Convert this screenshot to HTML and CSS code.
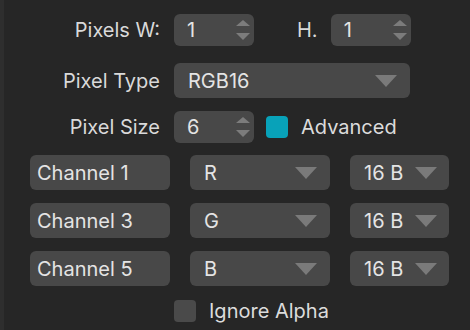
FILE: index.html
```html
<!DOCTYPE html>
<html lang="en">
<head>
    <meta charset="UTF-8">
    <title>Pixel Format</title>
    <link rel="stylesheet" href="styles.css">
</head>
<body>
<div class="panel">
    <!-- верхняя часть: размеры и тип -->
    <div class="row row-w">
        <div class="label">Pixels W:</div>
        <div class="field spin">
            <span>1</span>
            <span class="spin-arrows"><i class="up"></i><i class="down"></i></span>
        </div>
        <div class="label small">H.</div>
        <div class="field spin">
            <span>1</span>
            <span class="spin-arrows"><i class="up"></i><i class="down"></i></span>
        </div>
    </div>

    <div class="row row-type">
        <div class="label">Pixel Type</div>
        <div class="field select wide">
            <span>RGB16</span>
            <i class="caret"></i>
        </div>
    </div>

    <div class="row row-size">
        <div class="label">Pixel Size</div>
        <div class="field spin">
            <span>6</span>
            <span class="spin-arrows"><i class="up"></i><i class="down"></i></span>
        </div>
        <label class="check">
            <span class="box on"></span>
            <span>Advanced</span>
        </label>
    </div>

    <!-- каналы -->
    <div class="channels">
        <div class="channel-row">
            <div class="field name">Channel 1</div>
            <div class="field select mid"><span>R</span><i class="caret"></i></div>
            <div class="field select bits"><span>16 B</span><i class="caret"></i></div>
        </div>
        <div class="channel-row">
            <div class="field name">Channel 3</div>
            <div class="field select mid"><span>G</span><i class="caret"></i></div>
            <div class="field select bits"><span>16 B</span><i class="caret"></i></div>
        </div>
        <div class="channel-row">
            <div class="field name">Channel 5</div>
            <div class="field select mid"><span>B</span><i class="caret"></i></div>
            <div class="field select bits"><span>16 B</span><i class="caret"></i></div>
        </div>
    </div>

    <label class="check alpha">
        <span class="box"></span>
        <span>Ignore Alpha</span>
    </label>
</div>
</body>
</html>
```

FILE: styles.css
```css
body {
    margin: 0;
    padding: 0;
    background-color: #262626;
    color: #dcdcdc;
    font-family: 'Inter', 'Liberation Sans', sans-serif;
    font-size: 20px;
    height: 330px;
    overflow: hidden;
}

.panel {
    height: 100%;
    box-sizing: border-box;
    border-left: 4px solid #2e2e2e;
    padding-top: 14px;
}

/* Строка метка / поле */
.row {
    display: flex;
    align-items: center;
}

.row-type {
    margin-top: 17px;
}

.row-size {
    margin-top: 13px;
}

.label {
    width: 156px;
    margin-right: 14px;
    text-align: right;
    color: #d9d9d9;
}

.label.small {
    width: auto;
    margin-left: 43px;
    margin-right: 13px;
}

/* Поле */
.field {
    display: flex;
    align-items: center;
    box-sizing: border-box;
    background-color: #484848;
    border-radius: 6px;
    color: #e4e4e4;
    height: 35px;
}

.spin {
    width: 80px;
    height: 32px;
    padding-left: 13px;
    justify-content: space-between;
}

.spin-arrows {
    display: flex;
    flex-direction: column;
    gap: 7px;
    margin-right: 4px;
}

.spin-arrows i {
    width: 0;
    height: 0;
    border-left: 7px solid transparent;
    border-right: 7px solid transparent;
}

.spin-arrows .up {
    border-bottom: 6px solid #7c7c7c;
}

.spin-arrows .down {
    border-top: 7px solid #7c7c7c;
}

.select {
    justify-content: space-between;
    padding-left: 14px;
    padding-right: 13px;
}

.wide {
    width: 236px;
}

.caret {
    width: 0;
    height: 0;
    border-left: 11.5px solid transparent;
    border-right: 11.5px solid transparent;
    border-top: 12px solid #7a7a7a;
}

/* Чекбокс */
.check {
    display: flex;
    align-items: center;
    gap: 13px;
    color: #dcdcdc;
}

.row .check {
    margin-left: 12px;
}

.box {
    width: 22px;
    height: 22px;
    border-radius: 4px;
    background-color: #4a4a4a;
}

.box.on {
    background-color: #08a2b9;
}

/* Каналы */
.channels {
    display: flex;
    flex-direction: column;
    gap: 13px;
    margin-top: 12px;
    margin-left: 26px;
}

.channel-row {
    display: flex;
    gap: 20px;
}

.name {
    width: 140px;
    padding-left: 7px;
}

.mid {
    width: 140px;
}

.bits {
    width: 99px;
    padding-right: 12px;
}

.alpha {
    margin-top: 13px;
    margin-left: 170px;
}
```
